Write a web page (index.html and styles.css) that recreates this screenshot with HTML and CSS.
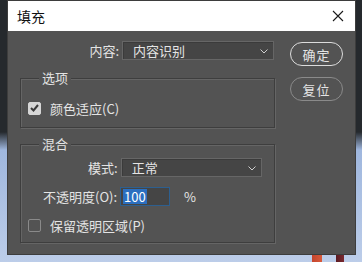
FILE: index.html
```html
<!DOCTYPE html>
<html lang="zh-CN">
<head>
<meta charset="utf-8">
<title>填充</title>
<link rel="stylesheet" href="styles.css">
</head>
<body>
<div class="window">
  <div class="titlebar">
    <span class="title">填充</span>
    <svg class="close" width="12" height="12" viewBox="0 0 12 12"><path d="M1 1L11 11M11 1L1 11" stroke="#1a1a1a" stroke-width="1.1" fill="none"/></svg>
  </div>
  <div class="content">
    <div class="main">
      <div class="row top-row">
        <span class="label">内容:</span>
        <div class="select wide"><span>内容识别</span><svg class="chev" width="8" height="5" viewBox="0 0 8 5"><path d="M0.5 0.5L4 4L7.5 0.5" stroke="#cfcfcf" stroke-width="1" fill="none"/></svg></div>
      </div>
      <div class="group g1">
        <span class="legend">选项</span>
        <div class="check-row">
          <span class="checkbox checked"><svg width="9" height="8" viewBox="0 0 9 8"><path d="M1 4L3.5 6.5L8 1" stroke="#3a3a3a" stroke-width="2" fill="none"/></svg></span>
          <span>颜色适应(C)</span>
        </div>
      </div>
      <div class="group g2">
        <span class="legend">混合</span>
        <div class="row mode-row">
          <span class="label">模式:</span>
          <div class="select mode"><span>正常</span><svg class="chev" width="8" height="5" viewBox="0 0 8 5"><path d="M0.5 0.5L4 4L7.5 0.5" stroke="#cfcfcf" stroke-width="1" fill="none"/></svg></div>
        </div>
        <div class="row opacity-row">
          <span class="label">不透明度(O):</span>
          <div class="input"><span class="sel">100</span></div>
          <span class="pct">%</span>
        </div>
        <div class="check-row">
          <span class="checkbox"></span>
          <span>保留透明区域(P)</span>
        </div>
      </div>
    </div>
    <div class="buttons">
      <div class="btn primary">确定</div>
      <div class="btn">复位</div>
    </div>
  </div>
</div>
</body>
</html>
```
FILE: styles.css
```css
html, body {
  margin: 0;
  padding: 0;
  width: 362px;
  height: 262px;
  overflow: hidden;
}
body {
  background:
    linear-gradient(to right, transparent 312px, #c4452e 312px, #d85a3a 322px, transparent 322px, transparent 336px, #5a1a22 336px, #7a2a30 344px, transparent 344px) bottom / 100% 8px no-repeat,
    linear-gradient(to bottom, #25292d 0, #25292d 132px, #9fb7de 150px, #bccde9 100%);
  font-family: "Noto Sans CJK SC", "Noto Sans", sans-serif;
  font-size: 13px;
  color: #e4e4e4;
}
.window {
  margin: 1px 0 0 8px;
  width: 347px;
  height: 253px;
  background: #535353;
  display: flex;
  flex-direction: column;
  box-shadow: 0 0 0 1px #3d3d3d;
}
.titlebar {
  height: 30px;
  background: #ffffff;
  display: flex;
  align-items: center;
  justify-content: space-between;
  padding: 0 11px 0 9px;
  color: #111;
}
.title {
  font-size: 14px;
  line-height: 30px;
}
.content {
  display: flex;
  padding: 10px 0 0 12px;
}
.main {
  width: 255px;
  display: flex;
  flex-direction: column;
}
.row {
  display: flex;
  align-items: center;
  height: 19px;
}
.top-row {
  justify-content: flex-end;
  padding-right: 1px;
}
.label {
  margin-right: 3px;
  line-height: 19px;
}
.select {
  height: 19px;
  box-sizing: border-box;
  border: 1px solid #666;
  background: #454545;
  display: flex;
  align-items: center;
  justify-content: space-between;
  padding: 0 5px 0 10px;
  box-shadow: inset 1px 1px 0 #3b3b3b;
}
.select.wide { width: 152px; }
.select.mode { width: 141px; }
.chev { margin-top: 1px; }
.group {
  box-sizing: border-box;
  border: 1px solid #3e3e3e;
  box-shadow: inset 1px 1px 0 #656565, 1px 1px 0 #656565;
  display: flex;
  flex-direction: column;
}
.legend {
  align-self: flex-start;
  background: #535353;
  padding: 0 3px;
  margin: -10px 0 0 18px;
  line-height: 18px;
}
.g1 {
  margin-top: 18px;
  height: 50px;
}
.g1 .check-row { margin-top: 12px; }
.g2 {
  margin-top: 16px;
  height: 99px;
}
.check-row {
  display: flex;
  align-items: center;
  height: 18px;
  padding-left: 7px;
}
.checkbox {
  width: 13px;
  height: 13px;
  box-sizing: border-box;
  border: 1px solid #8a8a8a;
  border-radius: 2px;
  margin-right: 9px;
  display: flex;
  align-items: center;
  justify-content: center;
}
.checkbox.checked {
  background: #d6d6d6;
  border-color: #d6d6d6;
}
.mode-row {
  margin-top: 5px;
  padding-left: 67px;
}
.opacity-row {
  margin-top: 10px;
  padding-left: 22px;
}
.input {
  width: 50px;
  height: 19px;
  box-sizing: border-box;
  border: 1px solid #2d5f8f;
  background: #454545;
  display: flex;
  align-items: center;
  padding-left: 2px;
}
.sel {
  background: #2b6fc0;
  color: #ffffff;
  line-height: 15px;
  padding: 0 1px;
}
.pct { margin-left: 14px; }
.g2 .check-row { margin-top: 10px; }
.buttons {
  margin-left: 15px;
  display: flex;
  flex-direction: column;
  gap: 11px;
  margin-top: 1px;
}
.btn {
  width: 53px;
  height: 24px;
  box-sizing: border-box;
  border: 1px solid #8a8a8a;
  border-radius: 12px;
  display: flex;
  align-items: center;
  justify-content: center;
  letter-spacing: 1px;
}
.btn.primary {
  border: 1.5px solid #dcdcdc;
}
```
